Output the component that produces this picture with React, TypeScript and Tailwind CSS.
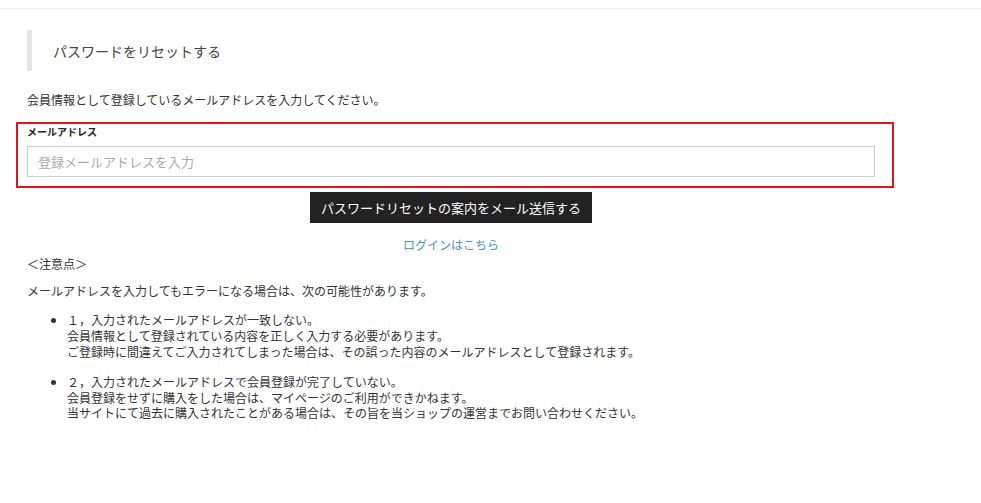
import React from "react";

export default function App() {
  const font = { fontFamily: '"Noto Sans CJK JP", "Noto Sans", sans-serif' };
  return (
    <div className="min-h-[503px] w-full bg-white text-[#333]" style={font}>
      <div className="h-[9px] border-b border-[#eeeeee]" />
      <div className="w-[902px]">
        <div className="ml-[27px] mt-[21px] flex h-[41px] items-center border-l-[5px] border-[#e5e5e5] pl-[21px] text-[14px] leading-[20px] text-[#444]">
          パスワードをリセットする
        </div>
        <p className="ml-[27px] mt-[20px] text-[12px] leading-[18px]">
          会員情報として登録しているメールアドレスを入力してください。
        </p>
        <div className="ml-[16px] mt-[13px] w-[878px] border-2 border-[#e5141f] pl-[9px] pr-[17px] pb-[9px]">
          <div className="text-[10px] font-bold leading-[16px] text-[#222]">メールアドレス</div>
          <input
            className="mt-[6px] block h-[31px] w-full border border-[#cccccc] px-[10px] text-[13px] text-[#333] outline-none placeholder:text-[#aaaaaa]"
            style={font}
            placeholder="登録メールアドレスを入力"
          />
        </div>
        <div className="mt-[4px] flex justify-center">
          <button
            className="flex h-[31px] w-[282px] items-center justify-center bg-[#222222] text-[13px] text-white"
            style={font}
          >
            パスワードリセットの案内をメール送信する
          </button>
        </div>
        <div className="mt-[13px] flex justify-center">
          <a className="text-[12px] leading-[18px] text-[#4a8de0]" href="#">
            ログインはこちら
          </a>
        </div>
        <p className="ml-[27px] mt-[1px] text-[12px] leading-[18px]">＜注意点＞</p>
        <p className="ml-[27px] mt-[9px] text-[12px] leading-[18px]">
          メールアドレスを入力してもエラーになる場合は、次の可能性があります。
        </p>
        <ul className="ml-[27px] mt-[12px] list-disc pl-[40px] text-[12px] leading-[16px]">
          <li>
            １，入力されたメールアドレスが一致しない。
            <br />
            会員情報として登録されている内容を正しく入力する必要があります。
            <br />
            ご登録時に間違えてご入力されてしまった場合は、その誤った内容のメールアドレスとして登録されます。
          </li>
          <li className="mt-[14px] leading-[15.6px]">
            ２，入力されたメールアドレスで会員登録が完了していない。
            <br />
            会員登録をせずに購入をした場合は、マイページのご利用ができかねます。
            <br />
            当サイトにて過去に購入されたことがある場合は、その旨を当ショップの運営までお問い合わせください。
          </li>
        </ul>
      </div>
    </div>
  );
}
